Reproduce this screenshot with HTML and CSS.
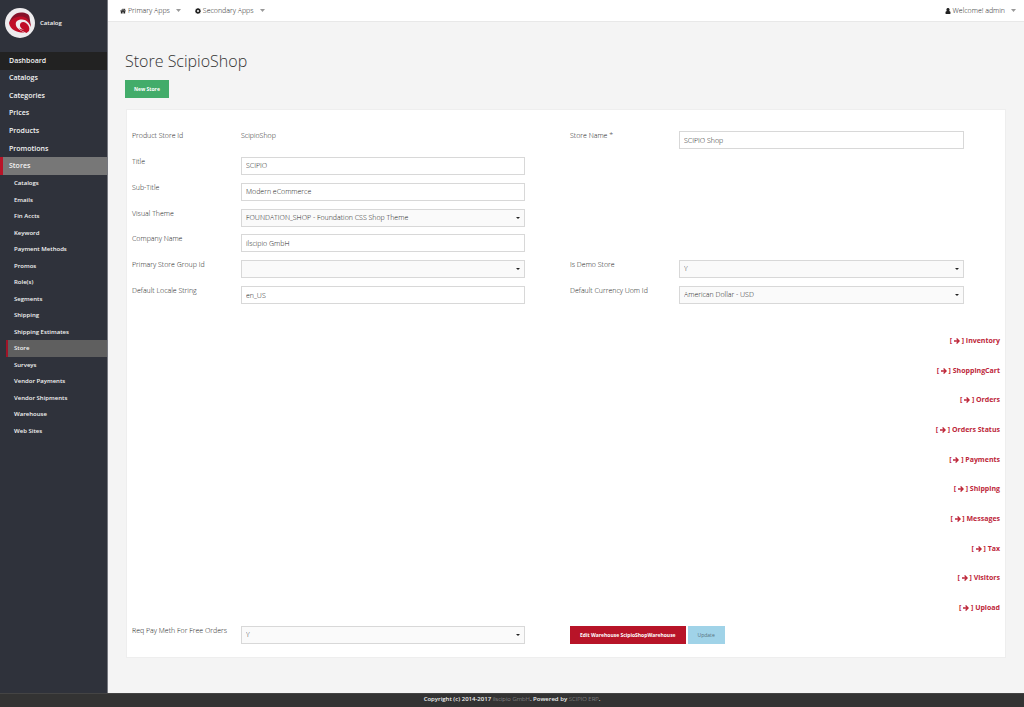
FILE: index.html
```html
<!DOCTYPE html>
<html lang="en">
<head>
<meta charset="utf-8">
<title>Store ScipioShop</title>
<link rel="stylesheet" href="styles.css">
</head>
<body>
<svg class="sprite" aria-hidden="true">
  <symbol id="arrow" viewBox="0 0 14 14"><path d="M0 7h12M6 1l6 6-6 6" fill="none" stroke="currentColor" stroke-width="3"/></symbol>
  <symbol id="caret" viewBox="0 0 10 6"><path d="M0 0h10L5 6z" fill="currentColor"/></symbol>
</svg>
<div class="shell">
  <aside class="sidebar">
    <div class="brand">
      <svg class="logo" viewBox="0 0 30 30" aria-hidden="true">
        <circle cx="15" cy="15" r="15" fill="#eeecee"/>
        <path d="M4 15C6 9 10 4.500 16 4.500C21 4.500 24 6 24.500 9L26 19C24 13 21 9.500 17 9.500C12 9.500 9 12 4 15z" fill="#86122a"/>
        <path d="M4 15C7 10 12 8 17 8.500C22 9 25 13 26 19C24.500 15 21 11.500 17 11.500C12 11.500 10 14 11 17.500C12 21 16 23 20 24.500C13 25 5 22 4 15z" fill="#c00d27"/>
        <path d="M15 18C14.500 14.500 18 13 21 15C24 17 25 20 24 23L21.500 25C18 23.500 15 22 13.500 20C15 21 17 21.500 19.500 22C17 21 15.500 20 15 18z" fill="#c00d27"/>
      </svg>
      <span>Catalog</span>
    </div>
    <nav aria-label="Catalog">
      <ul class="menu">
        <li><a class="menu-link home" href="#">Dashboard</a></li>
        <li><a class="menu-link" href="#">Catalogs</a></li>
        <li><a class="menu-link" href="#">Categories</a></li>
        <li><a class="menu-link" href="#">Prices</a></li>
        <li><a class="menu-link" href="#">Products</a></li>
        <li><a class="menu-link" href="#">Promotions</a></li>
        <li><a class="menu-link current" href="#">Stores</a></li>
      </ul>
      <ul class="submenu">
        <li><a class="sub-link" href="#">Catalogs</a></li>
        <li><a class="sub-link" href="#">Emails</a></li>
        <li><a class="sub-link" href="#">Fin Accts</a></li>
        <li><a class="sub-link" href="#">Keyword</a></li>
        <li><a class="sub-link" href="#">Payment Methods</a></li>
        <li><a class="sub-link" href="#">Promos</a></li>
        <li><a class="sub-link" href="#">Role(s)</a></li>
        <li><a class="sub-link" href="#">Segments</a></li>
        <li><a class="sub-link" href="#">Shipping</a></li>
        <li><a class="sub-link" href="#">Shipping Estimates</a></li>
        <li><a class="sub-link active" href="#">Store</a></li>
        <li><a class="sub-link" href="#">Surveys</a></li>
        <li><a class="sub-link" href="#">Vendor Payments</a></li>
        <li><a class="sub-link" href="#">Vendor Shipments</a></li>
        <li><a class="sub-link" href="#">Warehouse</a></li>
        <li><a class="sub-link" href="#">Web Sites</a></li>
      </ul>
    </nav>
  </aside>
  <div class="content">
    <header class="topbar">
      <button class="top-item" type="button">
        <svg class="top-icon" viewBox="0 0 14 12" aria-hidden="true"><path d="M7 0L0 6l1 1 6-5 6 5 1-1-2-1.800V1h-2v1.500zM7 3L2 7v5h4V8h2v4h4V7z" fill="currentColor"/></svg>
        <span>Primary Apps</span><svg class="caret"><use href="#caret"/></svg>
      </button>
      <button class="top-item" type="button">
        <svg class="top-icon" viewBox="0 0 14 14" aria-hidden="true"><path d="M5.800 0h2.400l.4 1.900 1.300.5L11.500 1.300l1.300 1.400-1 1.600.5 1.300 1.700.3v2.300l-1.800.4-.5 1.200 1 1.600-1.500 1.500-1.600-1-1.200.5-.4 1.600H5.800l-.4-1.700-1.200-.5-1.600 1-1.500-1.500 1-1.600-.5-1.100L0 8.200V5.900l1.700-.3.5-1.300-1-1.600 1.400-1.400 1.600 1.100 1.200-.5zM7 4.700a2.300 2.300 0 1 0 0 4.600 2.300 2.300 0 0 0 0-4.600z" fill="currentColor" fill-rule="evenodd"/></svg>
        <span>Secondary Apps</span><svg class="caret"><use href="#caret"/></svg>
      </button>
      <button class="top-item user" type="button">
        <svg class="top-icon" viewBox="0 0 12 14" aria-hidden="true"><path d="M6 0a3.500 4 0 0 1 2.500 7C11 7 12 9 12 12c0 1-1 2-2 2H2c-1 0-2-1-2-2 0-3 1-5 3.500-5A3.500 4 0 0 1 6 0z" fill="currentColor"/></svg>
        <span>Welcome! admin</span><svg class="caret"><use href="#caret"/></svg>
      </button>
    </header>
    <main class="page">
      <h1 class="title">Store ScipioShop</h1>
      <button class="btn green" type="button">New Store</button>
      <form class="panel">
        <div class="fields">
          <span class="label">Product Store Id</span>
          <output class="value">ScipioShop</output>
          <label class="label right" for="name">Store Name *</label>
          <input class="control" id="name" type="text" value="SCIPIO Shop">

          <label class="label left" for="title">Title</label>
          <input class="control" id="title" type="text" value="SCIPIO">

          <label class="label left" for="subtitle">Sub-Title</label>
          <input class="control" id="subtitle" type="text" value="Modern eCommerce">

          <label class="label left" for="theme">Visual Theme</label>
          <select class="control" id="theme"><option>FOUNDATION_SHOP - Foundation CSS Shop Theme</option></select>

          <label class="label left" for="company">Company Name</label>
          <input class="control" id="company" type="text" value="ilscipio GmbH">

          <label class="label left" for="group">Primary Store Group Id</label>
          <select class="control" id="group"><option></option></select>
          <label class="label right" for="demo">Is Demo Store</label>
          <select class="control" id="demo"><option>Y</option></select>

          <label class="label left" for="locale">Default Locale String</label>
          <input class="control" id="locale" type="text" value="en_US">
          <label class="label right" for="currency">Default Currency Uom Id</label>
          <select class="control" id="currency"><option>American Dollar - USD</option></select>
        </div>
        <ul class="sections">
          <li><a class="section-link" href="#">[ <svg class="arrow"><use href="#arrow"/></svg> ] Inventory</a></li>
          <li><a class="section-link" href="#">[ <svg class="arrow"><use href="#arrow"/></svg> ] ShoppingCart</a></li>
          <li><a class="section-link" href="#">[ <svg class="arrow"><use href="#arrow"/></svg> ] Orders</a></li>
          <li><a class="section-link" href="#">[ <svg class="arrow"><use href="#arrow"/></svg> ] Orders Status</a></li>
          <li><a class="section-link" href="#">[ <svg class="arrow"><use href="#arrow"/></svg> ] Payments</a></li>
          <li><a class="section-link" href="#">[ <svg class="arrow"><use href="#arrow"/></svg> ] Shipping</a></li>
          <li><a class="section-link" href="#">[ <svg class="arrow"><use href="#arrow"/></svg> ] Messages</a></li>
          <li><a class="section-link" href="#">[ <svg class="arrow"><use href="#arrow"/></svg> ] Tax</a></li>
          <li><a class="section-link" href="#">[ <svg class="arrow"><use href="#arrow"/></svg> ] Visitors</a></li>
          <li><a class="section-link" href="#">[ <svg class="arrow"><use href="#arrow"/></svg> ] Upload</a></li>
        </ul>
        <div class="fields last">
          <label class="label left" for="free">Req Pay Meth For Free Orders</label>
          <select class="control" id="free"><option>Y</option></select>
          <div class="actions">
            <button class="btn red" type="button">Edit Warehouse ScipioShopWarehouse</button>
            <button class="btn blue" type="submit">Update</button>
          </div>
        </div>
      </form>
    </main>
  </div>
</div>
<footer class="footer">Copyright (c) 2014-2017 <a class="foot-link" href="#">ilscipio GmbH</a>. Powered by <a class="foot-link" href="#">SCIPIO ERP</a>.</footer>
</body>
</html>
```
FILE: styles.css
```css
* { box-sizing: border-box; }
body {
  margin: 0;
  min-height: 100vh;
  display: flex;
  flex-direction: column;
  background: #f4f4f4;
  color: #222;
  font: 300 7px/10px "Open Sans", "Noto Sans", sans-serif;
}
ul { list-style: none; margin: 0; padding: 0; }
a { text-decoration: none; }
button, input, select { font: inherit; color: inherit; margin: 0; border-radius: 0; }
.sprite { position: absolute; width: 0; height: 0; }
.shell { flex: 1; display: flex; }

.sidebar { width: 108px; flex: none; background: #2f323b; border-right: 1px solid #777980; color: #f4f4f4; font-weight: 600; }
.brand { height: 52px; padding: 8px 5px; display: flex; gap: 5px; font-size: 6px; line-height: 30px; }
.logo { width: 30px; height: 30px; }
.menu { display: grid; grid-auto-rows: 1fr; min-height: 123px; }
.submenu { display: grid; grid-auto-rows: 1fr; min-height: 264px; }
.menu li, .submenu li { display: flex; }
.menu-link, .sub-link { flex: 1; display: flex; align-items: center; color: inherit; }
.menu-link { padding-left: 9px; }
.home { background: #222; }
.current { background: #777; border-left: 3px solid #b81428; padding-left: 6px; }
.sub-link { padding-left: 8px; margin-left: 6px; font-size: 6px; }
.active { background: #5f5f5f; border-left: 2px solid #a01428; padding-left: 6px; }

.content { flex: 1; min-width: 0; }
.topbar { display: flex; align-items: center; gap: 14px; height: 22px; padding: 0 8px 0 12px; background: #fff; border-bottom: 1px solid #e8e8e8; }
.top-item { display: flex; align-items: center; gap: 2px; padding: 0; border: 0; background: none; }
.user { margin-left: auto; }
.top-icon { width: 6px; height: 6px; color: #222; }
.caret { width: 5px; height: 3px; margin-left: 4px; color: #999; }

.page { padding: 28px 18px 35px 17px; }
.title { margin: 0 0 7px; color: #333; font-size: 16px; line-height: 23px; font-weight: 300; }
.btn { height: 18px; padding: 0 9px; border: 1px solid; font-size: 5px; line-height: 16px; font-weight: 700; color: #fff; }
.green { display: block; padding: 0 8px; background: #43ac6a; border-color: #43ac6a; }
.red { background: #b81428; border-color: #b81428; }
.blue { background: #a0d3e8; border-color: #a0d3e8; color: #55707c; font-weight: 400; }
.panel { margin: 11px 0 0 1px; padding: 21px 5px 13px; background: #fff; border: 1px solid #eee; }
.fields { display: grid; grid-template-columns: 109fr 284fr 45fr 109fr 285fr; grid-auto-rows: 1fr; min-height: 181px; padding-right: 36px; }
.left { grid-column: 1; }
.right { grid-column: 4; }
.value { display: block; }
.control { width: 100%; height: 18px; padding: 0 4px; border: 1px solid #d8d8d8; background: #fff; }
select.control {
  appearance: none;
  background: #fafafa url("data:image/svg+xml,%3Csvg xmlns='http://www.w3.org/2000/svg' viewBox='0 0 4 2'%3E%3Cpath d='M0 0h4L2 2z' fill='%23222'/%3E%3C/svg%3E") no-repeat right 4px center / 4px 2px;
}
.sections { display: grid; grid-auto-rows: 1fr; min-height: 297px; margin-top: 14px; text-align: right; }
.sections li { display: flex; align-items: center; justify-content: flex-end; }
.section-link { color: #bd2639; font-weight: 700; }
.arrow { width: 6px; height: 6px; vertical-align: -1px; }
.last { min-height: 18px; margin-top: 3px; }
.actions { grid-column: 4 / 6; display: flex; gap: 2px; }
.footer { min-height: 14px; background: #333; border-top: 1px solid #444; color: #eee; text-align: center; font-size: 6px; font-weight: 600; }
.foot-link { color: #aaa; font-weight: 300; }
```
